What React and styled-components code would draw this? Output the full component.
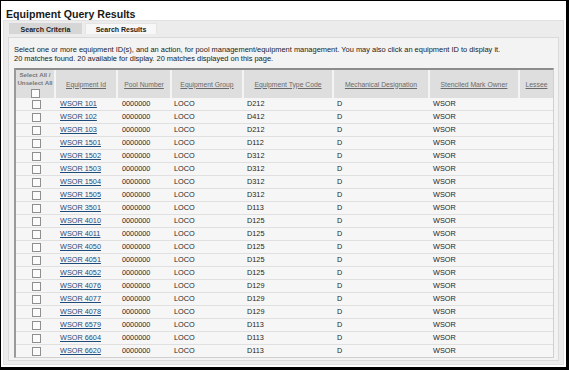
import React from "react";
import styled, { createGlobalStyle } from "styled-components";

const Global = createGlobalStyle`
  html, body { margin: 0; padding: 0; background: #fff; }
  body { font-family: "Liberation Sans", Arial, sans-serif; }
`;

const Frame = styled.div`
  width: 569px;
  height: 370px;
  box-sizing: border-box;
  border-style: solid;
  border-color: #000;
  border-width: 1px 3px 3px 1px;
  background: #fff;
  display: flex;
  flex-direction: column;
  overflow: hidden;
`;

const Title = styled.h1`
  margin: 0;
  padding: 7px 0 0 5px;
  height: 12px;
  font-size: 10.6px;
  line-height: 12px;
  font-weight: bold;
  color: #1a1a1a;
`;

const Panel = styled.div`
  margin: 0 2px 3px 2px;
  flex: 1;
  background: #ececec;
  border: 1px solid #e2e2e2;
  display: flex;
  flex-direction: column;
  padding: 2px 4px 3px 4px;
`;

const Tabs = styled.div`
  display: flex;
  gap: 3px;
  padding-left: 1px;
  height: 11px;
`;

const Tab = styled.div`
  width: ${(p) => p.$w}px;
  height: 11px;
  background: ${(p) => (p.$active ? "#f7f7f7" : "#d6d6d6")};
  border: 1px solid ${(p) => (p.$active ? "#e4e4e4" : "#d6d6d6")};
  border-bottom: none;
  box-sizing: border-box;
  font-size: 7px;
  font-weight: bold;
  color: #222;
  display: flex;
  align-items: center;
  justify-content: center;
`;

const Content = styled.div`
  margin-top: 3px;
  flex: 1;
  background: #f3f3f3;
  border: 1px solid #dadada;
  padding: 7px 4px 2px 5px;
  display: flex;
  flex-direction: column;
`;

const Intro = styled.p`
  margin: 0 0 5px 0;
  font-size: 7.45px;
  line-height: 9px;
  color: #222;
`;

const Table = styled.table`
  border-collapse: separate;
  border-spacing: 0;
  width: 537px;
  table-layout: fixed;
  border-style: solid;
  border-width: 2px 1px 1px 2px;
  border-color: #8c8c8c #d0d0d0 #d0d0d0 #9a9a9a;
  background: #f6f6f6;
`;

const Th = styled.th`
  background: #dedede;
  height: 28px;
  padding: 0 ${(p) => p.$pad ?? 2}px;
  border-right: 2px solid #f4f4f4;
  font-size: 6.8px;
  font-weight: normal;
  text-align: center;
  vertical-align: middle;
  color: #6a6a6a;
  white-space: nowrap;
  &:last-child { border-right: none; }
`;

const HeadLink = styled.a`
  color: #6a6a6a;
  text-decoration: underline;
`;

const SelectHead = styled.div`
  display: flex;
  flex-direction: column;
  align-items: center;
  font-weight: bold;
  font-size: 6.2px;
  line-height: 8.5px;
  color: #777;
  white-space: nowrap;
`;

const Td = styled.td`
  height: 12px;
  padding: 0 0 0 ${(p) => p.$pad ?? 3}px;
  border-bottom: 1px solid #e0e0e0;
  font-size: 7.3px;
  line-height: 12px;
  color: #1e1e1e;
  white-space: nowrap;
  overflow: hidden;
  text-align: ${(p) => (p.$center ? "center" : "left")};
  tr:last-child > & { border-bottom: none; }
`;

const IdLink = styled.a`
  color: #1f4b7a;
  text-decoration: underline;
`;

const Box = styled.span`
  display: inline-block;
  width: 7px;
  height: 7px;
  border: 1px solid #8f8f8f;
  background: #fbfbfb;
  vertical-align: middle;
  margin-top: ${(p) => (p.$head ? "1px" : "0")};
`;

const cols = [40, 62, 54, 72, 90, 96, 90, 33];

const rows = [
  ["WSOR 101", "D212"],
  ["WSOR 102", "D412"],
  ["WSOR 103", "D212"],
  ["WSOR 1501", "D112"],
  ["WSOR 1502", "D312"],
  ["WSOR 1503", "D312"],
  ["WSOR 1504", "D312"],
  ["WSOR 1505", "D312"],
  ["WSOR 3501", "D113"],
  ["WSOR 4010", "D125"],
  ["WSOR 4011", "D125"],
  ["WSOR 4050", "D125"],
  ["WSOR 4051", "D125"],
  ["WSOR 4052", "D125"],
  ["WSOR 4076", "D129"],
  ["WSOR 4077", "D129"],
  ["WSOR 4078", "D129"],
  ["WSOR 6579", "D113"],
  ["WSOR 6604", "D113"],
  ["WSOR 6620", "D113"],
];

const headers = [
  "Equipment Id",
  "Pool Number",
  "Equipment Group",
  "Equipment Type Code",
  "Mechanical Designation",
  "Stenciled Mark Owner",
  "Lessee",
];

export default function App() {
  return (
    <>
      <Global />
      <Frame>
        <Title>Equipment Query Results</Title>
        <Panel>
          <Tabs>
            <Tab $w={73}>Search Criteria</Tab>
            <Tab $w={72} $active>Search Results</Tab>
          </Tabs>
          <Content>
            <Intro>
              Select one or more equipment ID(s), and an action, for pool management/equipment management. You may also click an equipment ID to display it.
              <br />
              20 matches found. 20 available for display. 20 matches displayed on this page.
            </Intro>
            <Table>
              <colgroup>
                {cols.map((w, i) => (
                  <col key={i} style={{ width: w }} />
                ))}
              </colgroup>
              <thead>
                <tr>
                  <Th $pad={0}>
                    <SelectHead>
                      <span>Select All /</span>
                      <span>Unselect All</span>
                      <Box $head />
                    </SelectHead>
                  </Th>
                  {headers.map((h) => (
                    <Th key={h}>
                      <HeadLink href="#">{h}</HeadLink>
                    </Th>
                  ))}
                </tr>
              </thead>
              <tbody>
                {rows.map(([id, code]) => (
                  <tr key={id}>
                    <Td $center $pad={0}>
                      <Box />
                    </Td>
                    <Td $pad={4}>
                      <IdLink href="#">{id}</IdLink>
                    </Td>
                    <Td $pad={4}>0000000</Td>
                    <Td $pad={2}>LOCO</Td>
                    <Td>{code}</Td>
                    <Td>D</Td>
                    <Td>WSOR</Td>
                    <Td></Td>
                  </tr>
                ))}
              </tbody>
            </Table>
          </Content>
        </Panel>
      </Frame>
    </>
  );
}
